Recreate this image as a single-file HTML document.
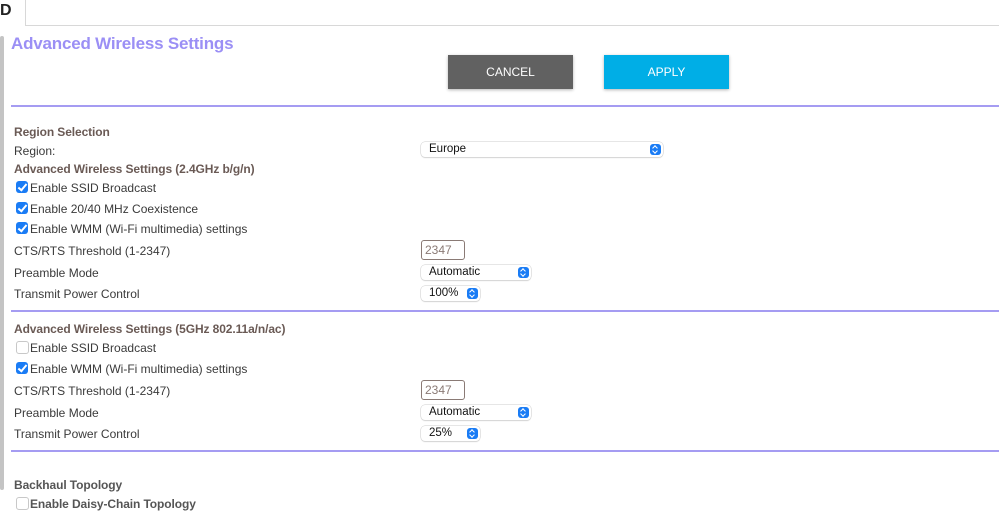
<!DOCTYPE html>
<html><head><meta charset="utf-8"><style>
body{margin:0;width:999px;height:516px;background:#fff;position:relative;overflow:hidden;font-family:"Liberation Sans",Arial,sans-serif;}
.a{position:absolute;white-space:nowrap;}
.t{font-size:12px;color:#3a3a3a;}
.h{font-size:12px;font-weight:bold;color:#6a5a55;letter-spacing:-0.1px;}
.line{position:absolute;left:11px;right:0;height:2px;background:#a59cf2;}
.cb{position:absolute;width:12px;height:12px;border-radius:3px;}
.on{background:#1a7cf5;}
.on::after{content:"";position:absolute;left:4px;top:1px;width:3px;height:7px;border:solid #fff;border-width:0 2px 2px 0;transform:rotate(40deg);}
.off{border:1px solid #c8c8c8;background:#fff;width:11px;height:11px;}
.sel{position:absolute;height:15px;border-radius:4px;background:#fff;box-shadow:0 0 0 0.5px #ccc,0 1px 1px rgba(0,0,0,.15);font-size:11.5px;color:#111;line-height:15px;padding-left:8px;box-sizing:border-box;}
.sel i{position:absolute;right:2px;top:2px;width:11px;height:11px;border-radius:3px;background:#1a7cf5;}
.sel i::before{content:"";position:absolute;left:3px;top:2px;width:3px;height:3px;border:solid #fff;border-width:1px 0 0 1px;transform:rotate(45deg);}
.sel i::after{content:"";position:absolute;left:3px;top:5px;width:3px;height:3px;border:solid #fff;border-width:0 1px 1px 0;transform:rotate(45deg);}
.inp{position:absolute;width:44px;height:20px;border:1px solid #8a7a75;border-radius:3px;box-sizing:border-box;font-size:12px;color:#8a7a75;padding-left:3px;line-height:18px;}
.btn{position:absolute;top:55px;width:125px;height:34px;color:#fff;font-size:12px;text-align:center;line-height:34px;box-shadow:0 1px 3px rgba(0,0,0,.3);}
</style></head><body>
<div class="a" style="left:0;top:0;font-size:16px;font-weight:bold;color:#222;line-height:22px;">D</div>
<div class="a" style="left:25px;top:-1px;right:-1px;height:25px;border:1px solid #d8d8d8;"></div>
<div class="a" style="left:0;top:36px;width:4px;height:454px;background:#c4c4c4;border-radius:2px;"></div>
<div class="a" style="left:11px;top:34px;font-size:17px;font-weight:bold;color:#9b8ff5;letter-spacing:-0.2px;">Advanced Wireless Settings</div>
<div class="btn" style="left:448px;background:#616161;">CANCEL</div>
<div class="btn" style="left:604px;background:#00aee6;">APPLY</div>
<div class="line" style="top:105px;"></div>

<div class="a h" style="left:14px;top:125px;">Region Selection</div>
<div class="a t" style="left:14px;top:144px;">Region:</div>
<div class="sel" style="left:421px;top:142px;width:242px;">Europe<i></i></div>
<div class="a h" style="left:14px;top:162px;">Advanced Wireless Settings (2.4GHz b/g/n)</div>
<div class="cb on" style="left:16px;top:181px;"></div><div class="a t" style="left:30px;top:181px;">Enable SSID Broadcast</div>
<div class="cb on" style="left:16px;top:202px;"></div><div class="a t" style="left:30px;top:202px;">Enable 20/40 MHz Coexistence</div>
<div class="cb on" style="left:16px;top:222px;"></div><div class="a t" style="left:30px;top:222px;">Enable WMM (Wi-Fi multimedia) settings</div>
<div class="a t" style="left:14px;top:244px;">CTS/RTS Threshold (1-2347)</div>
<div class="inp" style="left:421px;top:240px;">2347</div>
<div class="a t" style="left:14px;top:266px;">Preamble Mode</div>
<div class="sel" style="left:421px;top:265px;width:110px;">Automatic<i></i></div>
<div class="a t" style="left:14px;top:287px;">Transmit Power Control</div>
<div class="sel" style="left:421px;top:286px;width:59px;">100%<i></i></div>
<div class="line" style="top:310px;"></div>

<div class="a h" style="left:14px;top:322px;">Advanced Wireless Settings (5GHz 802.11a/n/ac)</div>
<div class="cb off" style="left:16px;top:341px;"></div><div class="a t" style="left:30px;top:341px;">Enable SSID Broadcast</div>
<div class="cb on" style="left:16px;top:362px;"></div><div class="a t" style="left:30px;top:362px;">Enable WMM (Wi-Fi multimedia) settings</div>
<div class="a t" style="left:14px;top:384px;">CTS/RTS Threshold (1-2347)</div>
<div class="inp" style="left:421px;top:380px;">2347</div>
<div class="a t" style="left:14px;top:406px;">Preamble Mode</div>
<div class="sel" style="left:421px;top:405px;width:110px;">Automatic<i></i></div>
<div class="a t" style="left:14px;top:427px;">Transmit Power Control</div>
<div class="sel" style="left:421px;top:426px;width:59px;">25%<i></i></div>
<div class="line" style="top:450px;"></div>

<div class="a h" style="left:14px;top:478px;color:#555;">Backhaul Topology</div>
<div class="cb off" style="left:16px;top:497px;"></div><div class="a h" style="left:30px;top:497px;color:#555;">Enable Daisy-Chain Topology</div>
</body></html>
